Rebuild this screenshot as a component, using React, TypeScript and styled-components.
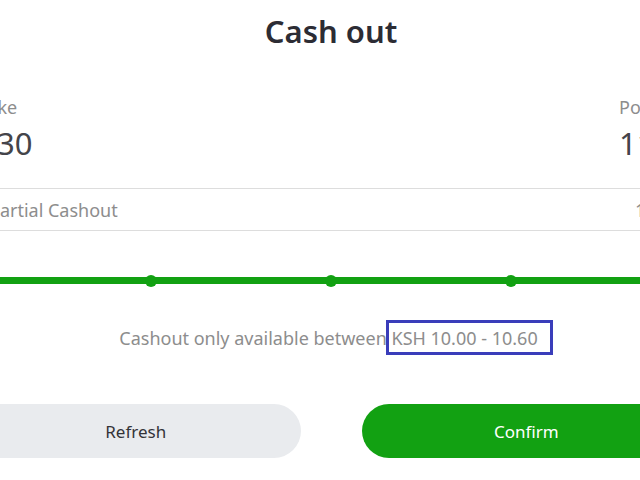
import styled, { createGlobalStyle } from 'styled-components'

const GlobalStyle = createGlobalStyle`
  html, body {
    margin: 0;
    padding: 0;
    background: #ffffff;
  }
  body {
    font-family: "Noto Sans", "Open Sans", sans-serif;
  }
`

const Viewport = styled.div`
  width: 640px;
  height: 480px;
  overflow: hidden;
  background: #ffffff;
`

const Dialog = styled.div`
  width: 720px;
  margin-left: -29px;
  display: flex;
  flex-direction: column;
`

const Title = styled.h1`
  margin: 0;
  padding-top: 10px;
  height: 60px;
  text-align: center;
  font-size: 31px;
  font-weight: 600;
  color: #2c2c34;
  line-height: 42px;
`

const StatsRow = styled.div`
  display: grid;
  grid-template-columns: 1fr 72px;
  padding-top: 25px;
  height: 118px;
  box-sizing: border-box;
`

const StatColumn = styled.div`
  display: flex;
  flex-direction: column;
  gap: 2px;
  white-space: nowrap;
`

const StatLabel = styled.span`
  font-size: 18px;
  color: #8d8d8d;
  line-height: 24px;
`

const StatValue = styled.span`
  font-size: 31px;
  color: #44444a;
  line-height: 44px;
`

const Divider = styled.div`
  height: 1px;
  background: #dddddd;
`

const PartialRow = styled.div`
  display: flex;
  align-items: center;
  justify-content: space-between;
  height: 41px;
  padding: 0 10px 0 18px;
  font-size: 18px;
  color: #8d8d8d;
  white-space: nowrap;
`

const SliderArea = styled.div`
  height: 89px;
  padding-top: 46px;
  box-sizing: border-box;
`

const Track = styled.div`
  position: relative;
  width: 100%;
  height: 7px;
  background: #12a112;
`

const Mark = styled.span<{ $at: number }>`
  position: absolute;
  top: 50%;
  left: ${p => p.$at}%;
  width: 12px;
  height: 12px;
  margin: -6px 0 0 -6px;
  border-radius: 50%;
  background: #12a112;
`

const Notice = styled.p`
  margin: 0;
  padding-left: 10px;
  height: 66px;
  text-align: center;
  font-size: 18px;
  color: #8d8d8d;
  line-height: 24px;
`

const Range = styled.span`
  display: inline-block;
  margin-left: -5px;
  border: 3px solid #3a3dba;
  padding: 3px 12px 2px 2px;
`

const Actions = styled.div`
  display: grid;
  grid-template-columns: 1fr 1fr;
  gap: 61px;
  padding-top: 18px;
`

const ActionButton = styled.button<{ $primary?: boolean }>`
  height: 54px;
  border: none;
  border-radius: 27px;
  font-family: inherit;
  font-size: 17px;
  background: ${p => (p.$primary ? '#12a112' : '#e9ebee')};
  color: ${p => (p.$primary ? '#ffffff' : '#333338')};
  cursor: pointer;
`

export default function App() {
  return (
    <Viewport>
      <GlobalStyle />
      <Dialog>
        <Title>Cash out</Title>
        <StatsRow>
          <StatColumn>
            <StatLabel>Stake</StatLabel>
            <StatValue>1.30</StatValue>
          </StatColumn>
          <StatColumn>
            <StatLabel>Possible Win</StatLabel>
            <StatValue>11.70</StatValue>
          </StatColumn>
        </StatsRow>
        <Divider />
        <PartialRow>
          <span>Partial Cashout</span>
          <span>10.60</span>
        </PartialRow>
        <Divider />
        <SliderArea>
          <Track>
            {[25, 50, 75].map(at => (
              <Mark key={at} $at={at} />
            ))}
          </Track>
        </SliderArea>
        <Notice>
          Cashout only available between <Range>KSH 10.00 - 10.60</Range>
        </Notice>
        <Actions>
          <ActionButton>Refresh</ActionButton>
          <ActionButton $primary>Confirm</ActionButton>
        </Actions>
      </Dialog>
    </Viewport>
  )
}
